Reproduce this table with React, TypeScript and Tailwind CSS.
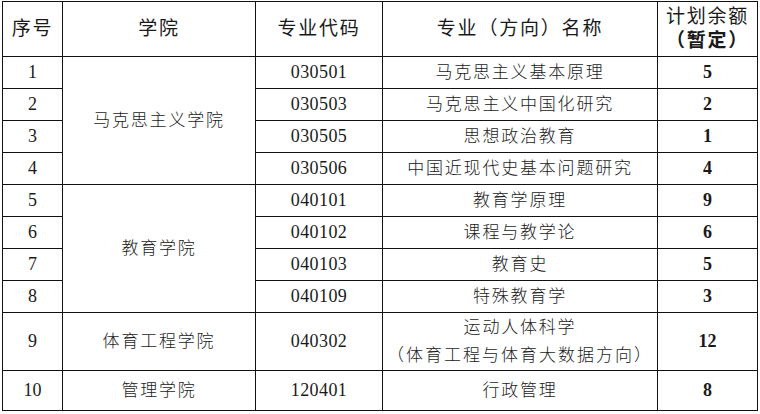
import React from "react";

type Row = {
  no: string;
  school?: string;
  span?: number;
  code: string;
  major: React.ReactNode;
  quota: string;
  h: string;
};

const rows: Row[] = [
  { no: "1", school: "马克思主义学院", span: 4, code: "030501", major: "马克思主义基本原理", quota: "5", h: "h-[32px]" },
  { no: "2", code: "030503", major: "马克思主义中国化研究", quota: "2", h: "h-[32px]" },
  { no: "3", code: "030505", major: "思想政治教育", quota: "1", h: "h-[32px]" },
  { no: "4", code: "030506", major: "中国近现代史基本问题研究", quota: "4", h: "h-[32px]" },
  { no: "5", school: "教育学院", span: 4, code: "040101", major: "教育学原理", quota: "9", h: "h-[32px]" },
  { no: "6", code: "040102", major: "课程与教学论", quota: "6", h: "h-[32px]" },
  { no: "7", code: "040103", major: "教育史", quota: "5", h: "h-[32px]" },
  { no: "8", code: "040109", major: "特殊教育学", quota: "3", h: "h-[32px]" },
  {
    no: "9",
    school: "体育工程学院",
    span: 1,
    code: "040302",
    major: (
      <div className="leading-[28px]">
        <div>运动人体科学</div>
        <div className="tracking-[2px]">（体育工程与体育大数据方向）</div>
      </div>
    ),
    quota: "12",
    h: "h-[58px]",
  },
  { no: "10", school: "管理学院", span: 1, code: "120401", major: "行政管理", quota: "8", h: "h-[40px]" },
];

const cell = "border border-[#111] text-center align-middle p-0";
const zh = "font-['Liberation_Serif','Noto_Sans_CJK_SC',serif] font-light tracking-[1.8px] text-[17px] text-[#1a1a1a]";
const num = "font-['Liberation_Serif','Noto_Sans_CJK_SC',serif] text-[18px] text-[#1a1a1a]";

export default function App() {
  return (
    <div className="w-[760px] h-[414px] bg-white overflow-hidden pt-[1px] pl-[2px]">
      <table className="table-fixed border-collapse w-[756px]">
        <colgroup>
          <col className="w-[60px]" />
          <col className="w-[193px]" />
          <col className="w-[127px]" />
          <col className="w-[275px]" />
          <col className="w-[100px]" />
        </colgroup>
        <thead>
          <tr className="h-[55px]">
            <th className={`${cell} font-normal ${zh} text-[19px] tracking-[1.2px]`}>序号</th>
            <th className={`${cell} font-normal ${zh} text-[19px] tracking-[1.2px]`}>学院</th>
            <th className={`${cell} font-normal ${zh} text-[19px] tracking-[1.2px]`}>专业代码</th>
            <th className={`${cell} font-normal ${zh} text-[19px] tracking-[1.2px]`}>专业（方向）名称</th>
            <th className={`${cell} font-normal ${zh} text-[19px] tracking-[0px] leading-[24px]`}>
              <div>计划余额</div>
              <div className="font-bold">（暂定）</div>
            </th>
          </tr>
        </thead>
        <tbody>
          {rows.map((r) => (
            <tr key={r.no} className={r.h}>
              <td className={`${cell} ${num}`}>{r.no}</td>
              {r.school && (
                <td rowSpan={r.span} className={`${cell} ${zh}`}>
                  {r.school}
                </td>
              )}
              <td className={`${cell} ${num} tracking-[0.4px]`}>{r.code}</td>
              <td className={`${cell} ${zh}`}>{r.major}</td>
              <td className={`${cell} ${num} font-bold`}>{r.quota}</td>
            </tr>
          ))}
        </tbody>
      </table>
    </div>
  );
}
